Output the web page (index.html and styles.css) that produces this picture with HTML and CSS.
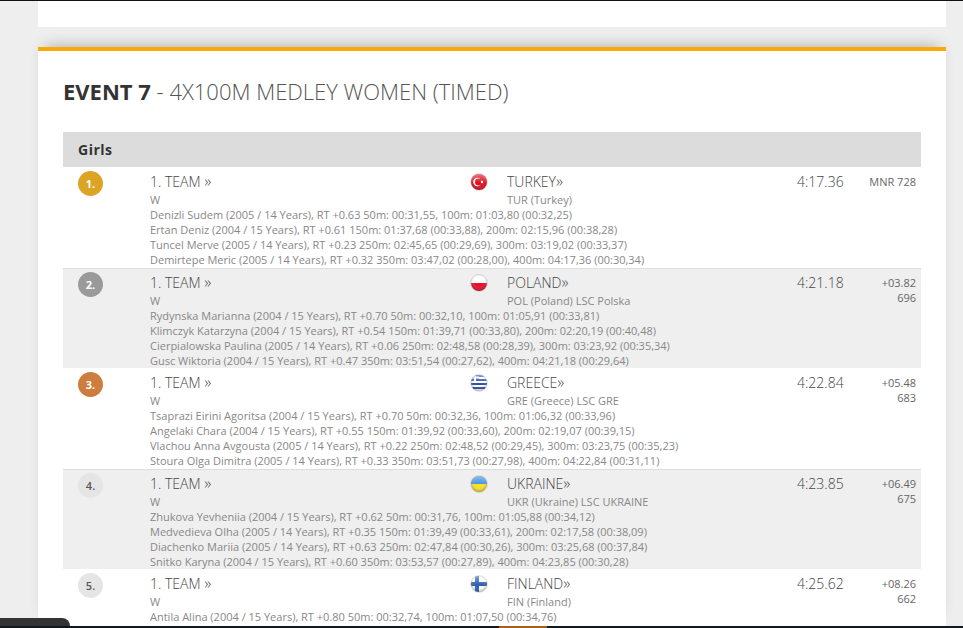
FILE: index.html
```html
<!DOCTYPE html>
<html lang="en">
<head>
<meta charset="utf-8">
<title>Event 7</title>
<link rel="stylesheet" href="styles.css">
</head>
<body>
<svg class="defs" width="0" height="0" aria-hidden="true">
  <defs>
    <clipPath id="disc"><circle cx="9" cy="9" r="8"/></clipPath>
    <radialGradient id="shade" cx="50%" cy="42%" r="58%">
      <stop offset="0.5" stop-color="#fff" stop-opacity="0"/>
      <stop offset="1" stop-color="#000" stop-opacity="0.32"/>
    </radialGradient>
    <linearGradient id="gloss" x1="0" y1="0" x2="0" y2="1">
      <stop offset="0" stop-color="#fff" stop-opacity="0.4"/>
      <stop offset="0.5" stop-color="#fff" stop-opacity="0.05"/>
      <stop offset="0.55" stop-color="#fff" stop-opacity="0"/>
    </linearGradient>
    <g id="finish">
      <circle cx="9" cy="9" r="8" fill="url(#shade)"/>
      <circle cx="9" cy="9" r="8" fill="url(#gloss)"/>
      <circle cx="9" cy="9" r="8.4" fill="none" stroke="#aaa" stroke-opacity="0.5" stroke-width="0.8"/>
    </g>
  </defs>
</svg>
<div class="topline"></div>
<div class="toppanel"></div>
<main class="card">
  <h1 class="title"><b>EVENT 7</b> - 4X100M MEDLEY WOMEN (TIMED)</h1>
  <div class="group">Girls</div>
  <div class="results">

  <section class="row">
    <div class="place gold">1.</div>
    <div class="team">1. TEAM <span class="more">»</span></div>
    <svg class="flag" width="18" height="18" viewBox="0 0 18 18"><g clip-path="url(#disc)"><rect width="18" height="18" fill="#e30f1f"/><circle cx="7.4" cy="9" r="4.2" fill="#fff"/><circle cx="8.4" cy="9" r="3.4" fill="#e30f1f"/><circle cx="12" cy="9" r="1.2" fill="#fff"/></g><use href="#finish"/></svg>
    <div class="nation">TURKEY<span class="more">»</span></div>
    <div class="time">4:17.36</div>
    <div class="pts">MNR 728</div>
    <div class="sub">W</div>
    <div class="club">TUR (Turkey)</div>
    <div class="splits">
      <div>Denizli Sudem (2005 / 14 Years), RT +0.63 50m: 00:31,55, 100m: 01:03,80 (00:32,25)</div>
      <div>Ertan Deniz (2004 / 15 Years), RT +0.61 150m: 01:37,68 (00:33,88), 200m: 02:15,96 (00:38,28)</div>
      <div>Tuncel Merve (2005 / 14 Years), RT +0.23 250m: 02:45,65 (00:29,69), 300m: 03:19,02 (00:33,37)</div>
      <div>Demirtepe Meric (2005 / 14 Years), RT +0.32 350m: 03:47,02 (00:28,00), 400m: 04:17,36 (00:30,34)</div>
    </div>
  </section>

  <section class="row alt">
    <div class="place silver">2.</div>
    <div class="team">1. TEAM <span class="more">»</span></div>
    <svg class="flag" width="18" height="18" viewBox="0 0 18 18"><g clip-path="url(#disc)"><rect width="18" height="9" fill="#fff"/><rect y="9" width="18" height="9" fill="#e8112d"/></g><use href="#finish"/></svg>
    <div class="nation">POLAND<span class="more">»</span></div>
    <div class="time">4:21.18</div>
    <div class="pts">+03.82<br>696</div>
    <div class="sub">W</div>
    <div class="club">POL (Poland) LSC Polska</div>
    <div class="splits">
      <div>Rydynska Marianna (2004 / 15 Years), RT +0.70 50m: 00:32,10, 100m: 01:05,91 (00:33,81)</div>
      <div>Klimczyk Katarzyna (2004 / 15 Years), RT +0.54 150m: 01:39,71 (00:33,80), 200m: 02:20,19 (00:40,48)</div>
      <div>Cierpialowska Paulina (2005 / 14 Years), RT +0.06 250m: 02:48,58 (00:28,39), 300m: 03:23,92 (00:35,34)</div>
      <div>Gusc Wiktoria (2004 / 15 Years), RT +0.47 350m: 03:51,54 (00:27,62), 400m: 04:21,18 (00:29,64)</div>
    </div>
  </section>

  <section class="row">
    <div class="place bronze">3.</div>
    <div class="team">1. TEAM <span class="more">»</span></div>
    <svg class="flag" width="18" height="18" viewBox="0 0 18 18"><g clip-path="url(#disc)"><rect width="18" height="18" fill="#fff"/><rect y="1" width="18" height="2" fill="#2f4fa8"/><rect y="5" width="18" height="2" fill="#2f4fa8"/><rect y="9" width="18" height="2" fill="#2f4fa8"/><rect y="13" width="18" height="2" fill="#2f4fa8"/><rect width="9" height="7" fill="#2f4fa8"/><rect x="4" width="2" height="7" fill="#fff"/><rect y="2.5" width="9" height="2" fill="#fff"/></g><use href="#finish"/></svg>
    <div class="nation">GREECE<span class="more">»</span></div>
    <div class="time">4:22.84</div>
    <div class="pts">+05.48<br>683</div>
    <div class="sub">W</div>
    <div class="club">GRE (Greece) LSC GRE</div>
    <div class="splits">
      <div>Tsaprazi Eirini Agoritsa (2004 / 15 Years), RT +0.70 50m: 00:32,36, 100m: 01:06,32 (00:33,96)</div>
      <div>Angelaki Chara (2004 / 15 Years), RT +0.55 150m: 01:39,92 (00:33,60), 200m: 02:19,07 (00:39,15)</div>
      <div>Vlachou Anna Avgousta (2005 / 14 Years), RT +0.22 250m: 02:48,52 (00:29,45), 300m: 03:23,75 (00:35,23)</div>
      <div>Stoura Olga Dimitra (2005 / 14 Years), RT +0.33 350m: 03:51,73 (00:27,98), 400m: 04:22,84 (00:31,11)</div>
    </div>
  </section>

  <section class="row alt">
    <div class="place plain">4.</div>
    <div class="team">1. TEAM <span class="more">»</span></div>
    <svg class="flag" width="18" height="18" viewBox="0 0 18 18"><g clip-path="url(#disc)"><rect width="18" height="9" fill="#3d8fe0"/><rect y="9" width="18" height="9" fill="#f5e02a"/></g><use href="#finish"/></svg>
    <div class="nation">UKRAINE<span class="more">»</span></div>
    <div class="time">4:23.85</div>
    <div class="pts">+06.49<br>675</div>
    <div class="sub">W</div>
    <div class="club">UKR (Ukraine) LSC UKRAINE</div>
    <div class="splits">
      <div>Zhukova Yevheniia (2004 / 15 Years), RT +0.62 50m: 00:31,76, 100m: 01:05,88 (00:34,12)</div>
      <div>Medvedieva Olha (2005 / 14 Years), RT +0.35 150m: 01:39,49 (00:33,61), 200m: 02:17,58 (00:38,09)</div>
      <div>Diachenko Mariia (2005 / 14 Years), RT +0.63 250m: 02:47,84 (00:30,26), 300m: 03:25,68 (00:37,84)</div>
      <div>Snitko Karyna (2004 / 15 Years), RT +0.60 350m: 03:53,57 (00:27,89), 400m: 04:23,85 (00:30,28)</div>
    </div>
  </section>

  <section class="row">
    <div class="place plain">5.</div>
    <div class="team">1. TEAM <span class="more">»</span></div>
    <svg class="flag" width="18" height="18" viewBox="0 0 18 18"><g clip-path="url(#disc)"><rect width="18" height="18" fill="#fff"/><rect y="7" width="18" height="4" fill="#2f5fb5"/><rect x="5" width="4" height="18" fill="#2f5fb5"/></g><use href="#finish"/></svg>
    <div class="nation">FINLAND<span class="more">»</span></div>
    <div class="time">4:25.62</div>
    <div class="pts">+08.26<br>662</div>
    <div class="sub">W</div>
    <div class="club">FIN (Finland)</div>
    <div class="splits">
      <div>Antila Alina (2004 / 15 Years), RT +0.80 50m: 00:32,74, 100m: 01:07,50 (00:34,76)</div>
    </div>
  </section>

  </div>
</main>
<div class="tab"></div>
<div class="dock"><span class="dock-mark"></span></div>
</body>
</html>
```

FILE: styles.css
```css
* { box-sizing: border-box; }

html, body {
  margin: 0;
  height: 628px;
  overflow: hidden;
}

body {
  position: relative;
  background: #eeeeee;
  font-family: "Open Sans", sans-serif;
  color: #444;
}

.defs { position: absolute; }

.topline { height: 1px; background: #111; }

.toppanel {
  height: 26px;
  margin: 0 17px 0 38px;
  background: #fff;
}

.card {
  margin: 20px 17px 0 38px;
  padding: 0 25px;
  height: 581px;
  background: #fff;
  border-top: 4px solid #f9a908;
  box-shadow: 0 -8px 14px -8px rgba(0, 0, 0, 0.3);
}

.title {
  margin: 0;
  padding-top: 25px;
  height: 81px;
  font-size: 22px;
  line-height: 30px;
  font-weight: 300;
  color: #555;
}

.title b { font-weight: 700; color: #333; }

.group {
  height: 35px;
  padding-left: 15px;
  background: #dcdcdc;
  font-size: 14px;
  font-weight: 700;
  letter-spacing: 0.5px;
  line-height: 35px;
  color: #333;
}

.results {
  height: 461px;
  overflow: hidden;
}

.row {
  display: grid;
  grid-template-columns: 87px 321px 36px 290px 60px 1fr;
  grid-template-rows: 25.4px 15px auto;
  height: 100.5px;
  overflow: hidden;
  padding-right: 5px;
}

.row.alt {
  background: #efefef;
  box-shadow: inset 0 1px 0 #ddd;
}

.place {
  grid-column: 1;
  grid-row: 1 / span 3;
  width: 25px;
  height: 25px;
  margin: 4px 0 0 15px;
  border-radius: 50%;
  text-align: center;
  font-size: 11px;
  font-weight: 700;
  line-height: 25px;
  color: #fff;
}

.gold { background: #dca425; }
.silver { background: #9a9a9a; }
.bronze { background: #cd7d3e; }
.plain { background: #e5e5e5; color: #555; font-weight: 600; }

.team, .nation, .time {
  grid-row: 1;
  padding-top: 5px;
  font-size: 14px;
  font-weight: 300;
  line-height: 19px;
  white-space: nowrap;
}

.team { grid-column: 2; }
.nation { grid-column: 4; }
.time { grid-column: 5; }

.more { font-size: 16px; line-height: 14px; }

.flag {
  grid-column: 3;
  grid-row: 1;
  margin: 6px 0 0 -1px;
}

.pts {
  grid-column: 6;
  grid-row: 1 / span 3;
  padding-top: 7px;
  text-align: right;
  font-size: 11px;
  line-height: 15px;
  color: #666;
}

.sub, .club {
  grid-row: 2;
  font-size: 11px;
  line-height: 15px;
  color: #888;
}

.sub { grid-column: 2; }
.club { grid-column: 4; }

.splits {
  grid-column: 2 / -1;
  grid-row: 3;
  font-size: 11px;
  line-height: 15px;
  color: #888;
  white-space: nowrap;
}

.tab {
  position: absolute;
  left: 0;
  bottom: 0;
  width: 70px;
  height: 10px;
  background: #333;
  border-top-right-radius: 8px;
}

.dock {
  position: absolute;
  left: 0;
  right: 0;
  bottom: 0;
  height: 2px;
  background: #0f1a1e;
}

.dock-mark {
  position: absolute;
  left: 499px;
  top: 0;
  width: 48px;
  height: 2px;
  background: #a8601f;
}
```
